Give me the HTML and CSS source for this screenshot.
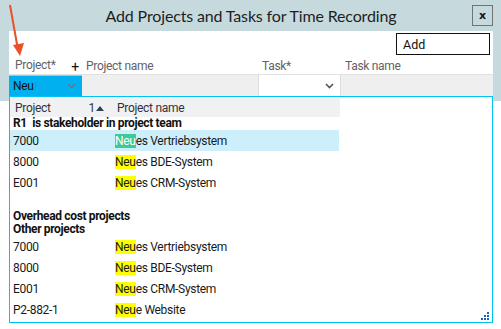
FILE: index.html
```html
<!DOCTYPE html>
<html lang="en">
<head>
  <meta charset="UTF-8">
  <meta name="viewport" content="width=device-width, initial-scale=1.0">
  <title>Add Projects and Tasks for Time Recording</title>
  <link rel="stylesheet" href="styles.css">
</head>
<body>
  <div class="window">
    <div class="titlebar">
      <span class="title">Add Projects and Tasks for Time Recording</span>
      <button class="close">x</button>
    </div>

    <div class="panel">
      <div class="toolbar">
        <button class="add">Add</button>
      </div>

      <div class="grid head">
        <div class="cell first">Project* <span class="plus">+</span></div>
        <div class="cell">Project name</div>
        <div class="cell">Task*</div>
        <div class="cell">Task name</div>
      </div>

      <div class="grid inputs">
        <div class="combo active">
          <span>Neu<i class="caret"></i></span>
          <svg class="chev" width="9" height="6" viewBox="0 0 9 6"><path d="M1 1l3.5 3.5L8 1" fill="none" stroke="currentColor" stroke-width="1.6"/></svg>
        </div>
        <div class="field"></div>
        <div class="combo">
          <span></span>
          <svg class="chev" width="9" height="6" viewBox="0 0 9 6"><path d="M1 1l3.5 3.5L8 1" fill="none" stroke="currentColor" stroke-width="1.6"/></svg>
        </div>
        <div class="field"></div>
      </div>
    </div>

    <div class="popup">
      <div class="list">
        <div class="list-head">
          <span class="c1">Project <span class="sort">1<svg width="8" height="5" viewBox="0 0 8 5"><path d="M0 5L4 0L8 5z" fill="#2f4050"/></svg></span></span>
          <span class="c2">Project name</span>
        </div>

        <div class="group">R1&nbsp; is stakeholder in project team</div>
        <div class="row selected"><span class="c1">7000</span><span class="c2"><mark>Neu</mark>es Vertriebsystem</span></div>
        <div class="row"><span class="c1">8000</span><span class="c2"><mark>Neu</mark>es BDE-System</span></div>
        <div class="row"><span class="c1">E001</span><span class="c2"><mark>Neu</mark>es CRM-System</span></div>

        <div class="group spaced">Overhead cost projects</div>
        <div class="group">Other projects</div>
        <div class="row"><span class="c1">7000</span><span class="c2"><mark>Neu</mark>es Vertriebsystem</span></div>
        <div class="row"><span class="c1">8000</span><span class="c2"><mark>Neu</mark>es BDE-System</span></div>
        <div class="row"><span class="c1">E001</span><span class="c2"><mark>Neu</mark>es CRM-System</span></div>
        <div class="row"><span class="c1">P2-882-1</span><span class="c2"><mark>Neu</mark>e Website</span></div>
      </div>
      <svg class="grip" width="9" height="9" viewBox="0 0 9 9">
        <rect x="7" y="1" width="2" height="2" fill="#1c64b4"/>
        <rect x="4" y="4" width="2" height="2" fill="#1c64b4"/>
        <rect x="7" y="4" width="2" height="2" fill="#1c64b4"/>
        <rect x="1" y="7" width="2" height="2" fill="#1c64b4"/>
        <rect x="4" y="7" width="2" height="2" fill="#1c64b4"/>
        <rect x="7" y="7" width="2" height="2" fill="#1c64b4"/>
      </svg>
    </div>

    <!-- annotation arrow -->
    <svg class="arrow" width="30" height="60" viewBox="0 0 30 60">
      <path d="M10 5L17.5 47" stroke="#e8512a" stroke-width="2" fill="none"/>
      <path d="M13 45L24 43L20 56z" fill="#e8512a"/>
    </svg>
  </div>
</body>
</html>
```

FILE: styles.css
```css
html, body {
  min-height: 100%;
}

body {
  margin: 0;
  min-height: 329px;
  background: #fff;
  font-family: Roboto, "Liberation Sans", sans-serif;
  font-size: 12px;
  letter-spacing: -0.3px;
  color: #1a1a1a;
}

.window {
  position: relative;
  height: 101px;
  background: #c6dade;
  padding: 0 8px 0 9px;
}

.titlebar {
  height: 31px;
  display: flex;
  align-items: center;
  justify-content: center;
  position: relative;
}

.title {
  font-family: Lato, "Noto Sans", sans-serif;
  font-size: 16px;
  letter-spacing: -0.15px;
  color: #1e1e1e;
  margin-top: -1px;
}

.close {
  position: absolute;
  right: 0;
  top: 5px;
  width: 21px;
  height: 21px;
  border: 1px solid #6f7476;
  background: transparent;
  font: bold 11px "DejaVu Sans", sans-serif;
  padding: 0;
  line-height: 17px;
  color: #111;
}

.panel {
  background: #fff;
  height: 70px;
}

.toolbar {
  height: 25px;
  display: flex;
  justify-content: flex-end;
  align-items: flex-start;
  padding: 2px 3px 0 0;
  box-sizing: border-box;
}

.add {
  width: 94px;
  height: 22px;
  border: 1px solid #111;
  background: #fff;
  font: 12.5px Roboto, sans-serif;
  text-align: left;
  padding: 0 6px;
  color: #111;
}

.grid {
  display: grid;
  grid-template-columns: 73px 176px 83px 1fr;
}

.head {
  height: 19px;
  border-bottom: 1px solid #e2e2e2;
  color: #5f6368;
  box-sizing: border-box;
  align-items: center;
}

.head .cell {
  padding-left: 4px;
  padding-top: 1px;
}

.head .first {
  padding-left: 6px;
  display: flex;
  justify-content: space-between;
  padding-right: 3px;
}

.plus {
  color: #111;
  font-size: 14px;
  line-height: 12px;
  padding-top: 3px;
}

.inputs {
  height: 21px;
}

.combo {
  display: flex;
  align-items: center;
  justify-content: space-between;
  padding: 0 6px 0 4px;
  background: #fff;
  border: 1px solid #dcdcdc;
  border-width: 0 1px;
  color: #555;
}

.combo.active {
  background: #00b0ef;
  border: none;
  border-top: 1px solid #7fd4f5;
  color: #111;
}

.combo.active .chev {
  color: #5d7c8c;
}

.caret {
  display: inline-block;
  width: 1px;
  height: 11px;
  margin-left: 1px;
  background: #e8512a;
  vertical-align: -2px;
}

.field {
  background: #efefef;
}

.popup {
  position: absolute;
  left: 9px;
  top: 96px;
  z-index: 2;
  width: 484px;
  height: 227px;
  box-sizing: border-box;
  border: 1px solid #00c3f5;
  background: #fff;
}

.list {
  width: 330px;
  padding-top: 1px;
}

.list-head {
  height: 19px;
  background: #f0f1f3;
  display: flex;
  align-items: center;
  color: #333;
}

.list-head .c1 {
  width: 105px;
  padding-left: 5px;
  box-sizing: border-box;
  display: flex;
  justify-content: space-between;
  padding-right: 11px;
}

.sort svg {
  margin-left: 1px;
  vertical-align: 1px;
}

.list-head .c2 {
  padding-left: 2px;
}

.group {
  height: 13px;
  line-height: 13px;
  font-weight: bold;
  letter-spacing: -0.35px;
  padding-left: 3px;
  color: #111;
}

.group.spaced {
  margin-top: 17px;
}

.row {
  height: 21px;
  display: flex;
  align-items: center;
  width: 329px;
}

.row .c1 {
  width: 105px;
  padding-left: 3px;
  box-sizing: border-box;
}

.row.selected {
  background: #cdeffc;
}

mark {
  background: #ffff00;
  color: inherit;
  padding: 0;
}

.row.selected mark {
  background: #3ec99b;
  color: #fff;
}

.grip {
  position: absolute;
  right: 3px;
  bottom: 2px;
}

.arrow {
  position: absolute;
  left: 0;
  top: 0;
  z-index: 3;
}
```
